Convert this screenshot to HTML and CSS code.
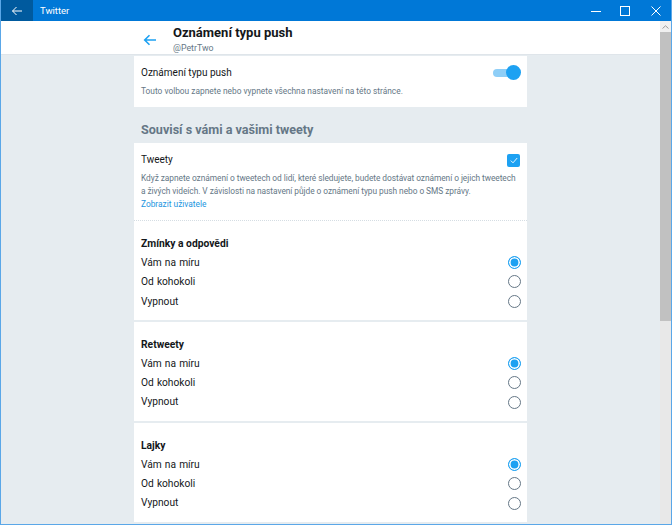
FILE: index.html
```html
<!DOCTYPE html>
<html lang="cs">
<head>
  <meta charset="UTF-8"/>
  <title>Twitter</title>
  <link rel="stylesheet" href="styles.css">
</head>
<body>
  <div class="window">
    <div class="titlebar">
      <div class="tb-back">
        <svg width="12" height="10" viewBox="0 0 12 10"><path d="M11 5H1.5M5.5 1L1.5 5l4 4" fill="none" stroke="#fff" stroke-width="1"/></svg>
      </div>
      <div class="tb-title">Twitter</div>
      <div class="tb-btn"><svg width="10" height="10" viewBox="0 0 10 10"><path d="M0 5.5h10" stroke="#fff" stroke-width="1"/></svg></div>
      <div class="tb-btn"><svg width="10" height="10" viewBox="0 0 10 10"><rect x="0.5" y="0.5" width="9" height="9" fill="none" stroke="#fff" stroke-width="1"/></svg></div>
      <div class="tb-btn"><svg width="10" height="10" viewBox="0 0 10 10"><path d="M0.5 0.5l9 9M9.5 0.5l-9 9" stroke="#fff" stroke-width="1"/></svg></div>
    </div>
    <div class="main">
      <div class="content">
        <div class="header">
          <div class="column header-inner">
            <div class="back">
              <svg width="14" height="12" viewBox="0 0 14 12"><path d="M13 6H2M6.5 1.2L1.7 6l4.8 4.8" fill="none" stroke="#1da1f2" stroke-width="1.6"/></svg>
            </div>
            <div>
              <div class="page-title">Oznámení typu push</div>
              <div class="page-sub">@PetrTwo</div>
            </div>
          </div>
        </div>

        <div class="column">
          <div class="card card-push">
            <div class="row">
              <div class="label">Oznámení typu push</div>
              <div class="toggle"><span class="knob"></span></div>
            </div>
            <div class="desc">Touto volbou zapnete nebo vypnete všechna nastavení na této stránce.</div>
          </div>

          <h2 class="group-title">Souvisí s vámi a vašimi tweety</h2>

          <div class="card">
            <div class="tweets">
              <div class="row">
                <div class="label">Tweety</div>
                <div class="checkbox">
                  <svg width="8" height="7" viewBox="0 0 8 7"><path d="M0.8 3.6l2.2 2.2 4.2-4.8" fill="none" stroke="#fff" stroke-width="0.9"/></svg>
                </div>
              </div>
              <div class="desc long">Když zapnete oznámení o tweetech od lidí, které sledujete, budete dostávat oznámení o jejich tweetech a živých videích. V závislosti na nastavení půjde o oznámení typu push nebo o SMS zprávy.</div>
              <a class="link">Zobrazit uživatele</a>
            </div>

            <div class="section">
              <div class="section-title">Zmínky a odpovědi</div>
              <div class="option"><span>Vám na míru</span><span class="radio on"></span></div>
              <div class="option"><span>Od kohokoli</span><span class="radio"></span></div>
              <div class="option"><span>Vypnout</span><span class="radio"></span></div>
            </div>

            <div class="section">
              <div class="section-title">Retweety</div>
              <div class="option"><span>Vám na míru</span><span class="radio on"></span></div>
              <div class="option"><span>Od kohokoli</span><span class="radio"></span></div>
              <div class="option"><span>Vypnout</span><span class="radio"></span></div>
            </div>

            <div class="section">
              <div class="section-title">Lajky</div>
              <div class="option"><span>Vám na míru</span><span class="radio on"></span></div>
              <div class="option"><span>Od kohokoli</span><span class="radio"></span></div>
              <div class="option"><span>Vypnout</span><span class="radio"></span></div>
            </div>
          </div>
        </div>
      </div>
      <div class="scrollbar">
        <div class="sb-up">
          <svg width="7" height="4" viewBox="0 0 7 4"><path d="M0.5 3.5L3.5 0.8l3 2.7" fill="none" stroke="#9a9a9a" stroke-width="1"/></svg>
        </div>
        <div class="sb-thumb"></div>
      </div>
    </div>
  </div>
</body>
</html>
```

FILE: styles.css
```css
:root { --blue:#1da1f2; --text:#14171a; --secondary:#657786; --bg:#e6ecf0; --line:#e6ecf0; }
*{box-sizing:border-box;margin:0;padding:0;}
body{font-family:Roboto,"Noto Sans",sans-serif;color:var(--text);background:#fff;}
.window{width:672px;height:525px;display:flex;flex-direction:column;border:1px solid #5aa7e8;border-top:none;overflow:hidden;}
.titlebar{height:21px;background:#0078d7;display:flex;align-items:center;color:#fff;margin:0 -1px;}
.tb-back{width:33px;height:21px;background:#005a9e;display:flex;align-items:center;justify-content:center;}
.tb-title{flex:1;font-size:9.5px;padding-left:7px;}
.tb-btn{width:29px;height:21px;display:flex;align-items:center;justify-content:center;}
.tb-btn:last-child{width:33px;}
.main{flex:1;display:flex;min-height:0;}
.content{flex:1;background:var(--bg);overflow:hidden;}
.column{width:393px;margin:0 auto;}
.header{background:#fff;height:34px;border-bottom:1px solid #dfe5ea;}
.header-inner{display:flex;align-items:flex-start;padding-top:4px;}
.back{width:39px;padding:6px 0 0 9px;}
.page-title{font-size:13px;font-weight:700;line-height:16px;}
.page-sub{font-size:8.8px;color:var(--secondary);line-height:13px;margin-top:1px;}
.card{background:#fff;}
.card-push{margin-top:1px;padding:9px 6px 9px 7px;}
.row{display:flex;align-items:center;justify-content:space-between;}
.label{font-size:10px;line-height:15px;}
.desc{font-size:8.35px;line-height:13px;color:var(--secondary);margin-top:5px;}
.toggle{position:relative;width:26px;height:8px;border-radius:4px;background:#8ecef7;margin-right:2px;}
.knob{position:absolute;right:-2px;top:-3.5px;width:15px;height:15px;border-radius:50%;background:var(--blue);}
.group-title{font-size:12.6px;font-weight:700;color:var(--secondary);line-height:20px;padding:13px 7px 0;margin-bottom:3px;}
.tweets{padding:10px 6px 9px 7px;border-bottom:1px dotted #d5dde3;}
.tweets .label{line-height:14px;}
.checkbox{width:13px;height:13px;border-radius:2px;background:var(--blue);display:flex;align-items:center;justify-content:center;margin-right:1px;}
.long{margin-top:5px;letter-spacing:-0.05px;}
.link{display:block;font-size:8.35px;line-height:13px;color:#1b95e0;}
.section{padding:14px 6px 9px 7px;border-bottom:2px solid var(--line);}
.section-title{font-size:10.3px;font-weight:700;line-height:18px;}
.option{display:flex;align-items:center;justify-content:space-between;font-size:10.2px;line-height:19.3px;word-spacing:0.6px;}
.radio{width:13px;height:13px;border-radius:50%;border:1.6px solid var(--secondary);}
.radio.on{border-color:var(--blue);background:var(--blue);box-shadow:inset 0 0 0 1.6px #fff;}
.scrollbar{width:11px;background:#e8e8e8;display:flex;flex-direction:column;}
.sb-up{height:11px;display:flex;align-items:center;justify-content:center;background:#f0f0f0;}
.sb-thumb{height:289px;background:#c1c1c1;}
```
